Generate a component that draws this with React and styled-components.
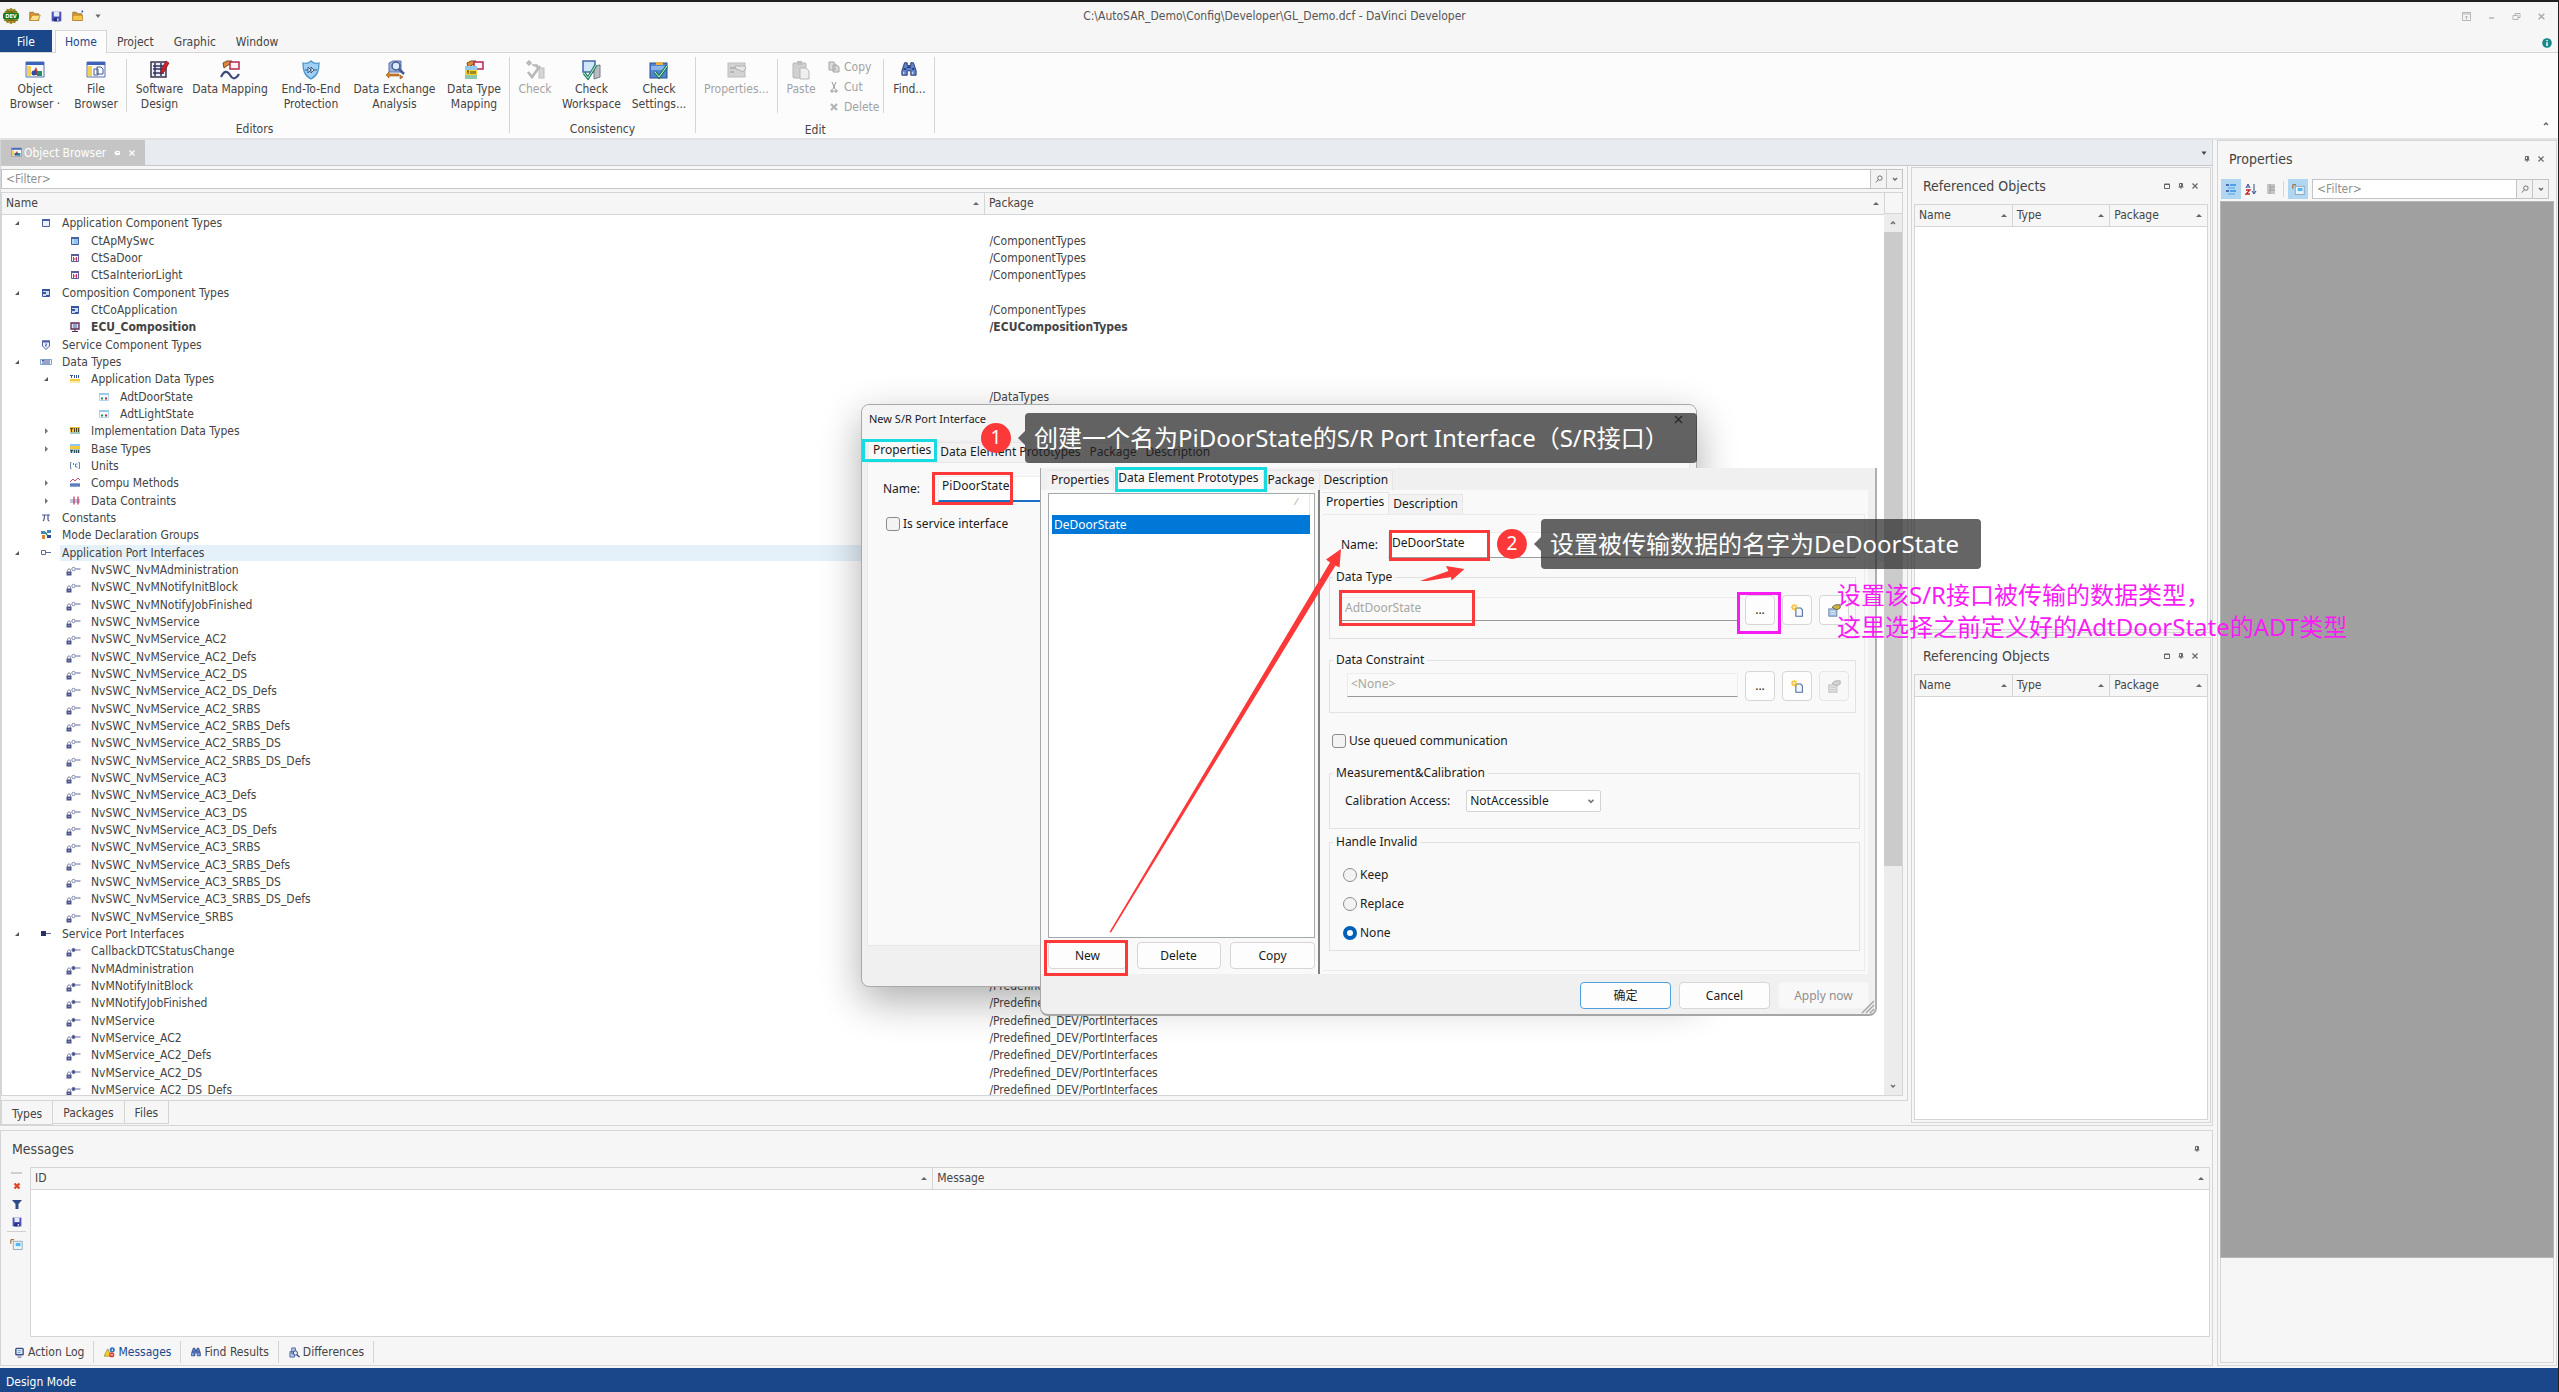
import React from "react";
import styled, { createGlobalStyle, css } from "styled-components";

const GlobalStyle = createGlobalStyle`
  * { box-sizing: border-box; }
  body {
    margin: 0;
    background: #f6f6f6;
    color: #444;
    font: 12px/16px "DejaVu Sans Condensed", "Noto Sans", "Noto Sans CJK SC", sans-serif;
  }
  button, input, select { font: inherit; color: inherit; margin: 0; }
  button { padding: 0; border: 0; background: none; }
`;

const line = "#d3d5d7";

/* ---------- frame ---------- */

const Frame = styled.div`
  position: relative;
  display: flex;
  flex-direction: column;
  height: 100vh;
  overflow: hidden;
  border-top: 2px solid #211f20;
  border-right: 1px solid #211f20;
`;

const TitleBar = styled.header`
  display: grid;
  grid-template-columns: 1fr auto 1fr;
  align-items: center;
  height: 28px;
  padding: 0 12px 0 3px;
  color: #555;
`;

const QuickAccess = styled.div`
  display: flex;
  align-items: center;
  gap: 10px;
`;

const WindowButtons = styled(QuickAccess)`
  justify-content: flex-end;
  gap: 16px;
  color: #b5b5b5;
`;

const MenuTabs = styled.nav`
  display: flex;
  height: 23px;
  border-bottom: 1px solid ${line};
`;

const MenuTab = styled.button`
  padding: 0 9px;
  border: 1px solid transparent;
  border-bottom: 0;
  ${(p) =>
    p.$file &&
    css`
      width: 52px;
      margin-right: 3px;
      background: #19478a;
      color: #fff;
    `}
  ${(p) =>
    p.$active &&
    css`
      margin-bottom: -1px;
      border-color: ${line};
      background: #fcfcfc;
      color: #19478a;
    `}
`;

const HelpSlot = styled.div`
  margin: 6px 6px 0 auto;
`;

const RibbonBar = styled.div`
  display: flex;
  height: 87px;
  background: #fcfcfc;
  border-bottom: 2px solid #e0e2e3;
`;

const RibbonGroup = styled.section`
  display: flex;
  flex-direction: column;
  margin: 4px 0 5px;
  border-right: 1px solid ${line};
`;

const RibbonItems = styled.div`
  display: flex;
  height: 56px;
`;

const GroupName = styled.div`
  margin-top: 9px;
  text-align: center;
`;

const RibbonButton = styled.button`
  display: flex;
  flex-direction: column;
  align-items: center;
  gap: 2px;
  width: ${(p) => p.$w}px;
  padding-top: 3px;
  line-height: 15px;
  color: ${(p) => (p.disabled ? "#a2a2a2" : "#444")};
  white-space: pre;
`;

const RibbonDivider = styled.div`
  width: 1px;
  margin: 2px ${(p) => p.$gap || 0}px 0;
  background: ${line};
`;

const SmallItems = styled.div`
  display: flex;
  flex-direction: column;
  padding: 0 4px;
`;

const SmallButton = styled.button`
  display: flex;
  flex: none;
  align-items: center;
  gap: 4px;
  height: 20px;
  color: #a2a2a2;
`;

const RibbonEnd = styled.div`
  margin: auto 8px 6px auto;
`;

const Main = styled.main`
  flex: 1;
  display: flex;
  gap: 4px;
  min-height: 0;
  padding-bottom: 2px;
`;

const LeftArea = styled.div`
  flex: 1;
  display: flex;
  flex-direction: column;
  gap: 4px;
  min-width: 0;
`;

const Workspace = styled.div`
  flex: 1;
  display: flex;
  flex-direction: column;
  min-height: 0;
  border: 1px solid ${line};
  border-top: 0;
`;

const DocStrip = styled.div`
  display: flex;
  align-items: center;
  justify-content: space-between;
  height: 26px;
  padding-right: 4px;
  background: #e8ecf1;
  border-bottom: 1px solid #c6c8ca;
`;

const DocTab = styled.button`
  display: flex;
  align-items: center;
  gap: 2px;
  height: 100%;
  padding: 0 9px 0 10px;
  background: #c5c5c5;
  color: #fff;

  svg + svg {
    margin-left: 5px;
  }
  span {
    margin-right: 5px;
  }
`;

const DocRow = styled.div`
  flex: 1;
  display: flex;
  gap: 3px;
  min-height: 0;
`;

const DocPane = styled.div`
  flex: 1;
  display: flex;
  flex-direction: column;
  min-width: 0;
`;

const DocBody = styled.div`
  flex: 1;
  display: flex;
  flex-direction: column;
  gap: 3px;
  min-height: 0;
  padding: 3px 4px 4px 0;
  border-right: 1px solid ${line};
  border-bottom: 1px solid ${line};
`;

/* ---------- filter box ---------- */

const FilterBox = styled.div`
  display: flex;
  flex: ${(p) => (p.$grow ? 1 : "none")};
  height: 20px;
  border: 1px solid #c4c4c4;
  background: #fff;

  input {
    flex: 1;
    min-width: 0;
    padding: 0 4px;
    border: 0;
    outline: 0;
    background: transparent;
  }
  input::placeholder {
    color: #909090;
    opacity: 1;
  }
  button {
    display: grid;
    place-items: center;
    width: 16px;
    border-left: 1px solid #c4c4c4;
    background: #f3f3f3;
  }
`;

/* ---------- tables ---------- */

const TableFrame = styled.div`
  flex: 1;
  display: flex;
  min-height: 0;
  border: 1px solid ${line};
  background: #fff;
`;

const TableClip = styled.div`
  flex: 1;
  min-width: 0;
  overflow: hidden;
`;

const Grid = styled.table`
  width: 100%;
  border-collapse: collapse;
  table-layout: fixed;
`;

const Th = styled.th`
  width: ${(p) => p.$width || "auto"};
  height: 21px;
  padding: 0 5px 0 4px;
  background: #f6f6f6;
  border-right: 1px solid ${line};
  border-bottom: 1px solid ${line};
  font-weight: 400;
  text-align: left;

  &:last-child {
    border-right: 0;
  }
  div {
    display: flex;
    align-items: center;
    justify-content: space-between;
  }
`;

const TreeRow = styled.tr`
  height: 17px;
  font-weight: ${(p) => (p.$bold ? 700 : 400)};

  &:nth-child(3n + 1) {
    height: 18px;
  }
  td {
    padding: 0;
    white-space: nowrap;
  }
  td + td {
    padding-left: 5px;
    background: ${(p) => (p.$selected ? "#e5f1fa" : "none")};
  }
`;

const TreeCell = styled.div`
  display: flex;
  align-items: stretch;
  padding-left: ${(p) => p.$level * 29}px;
`;

const TreeSlot = styled.span`
  display: grid;
  place-items: center;
  width: 29px;
`;

const TreeLabel = styled.span`
  flex: 1;
  padding-left: 2px;
  background: ${(p) => (p.$selected ? "#e5f1fa" : "none")};
`;

const ScrollBar = styled.div`
  display: flex;
  flex-direction: column;
  width: 18px;
  background: #ececec;
`;

const ScrollHead = styled.div`
  height: 21px;
  background: #f6f6f6;
  border-left: 1px solid ${line};
  border-bottom: 1px solid ${line};
`;

const ScrollEnd = styled.button`
  display: grid;
  place-items: center;
  height: 18px;
`;

const ScrollTrack = styled.div`
  flex: 1;
`;

const ScrollThumb = styled.div`
  height: 75%;
  background: #cbcbcb;
`;

const ViewTabs = styled.div`
  display: flex;
  height: 24px;
`;

const ViewTab = styled.button`
  height: ${(p) => (p.$active ? 24 : 23)}px;
  padding: 2px 10px 0;
  border: 1px solid ${line};
  border-width: ${(p) => (p.$active ? "0 1px 1px 1px" : "0 1px 1px 0")};
`;

/* ---------- docked panels ---------- */

const RefColumn = styled.div`
  display: grid;
  grid-template-rows: 466fr 486fr;
  gap: 4px;
  width: 301px;
  padding: 1px 1px 2px 0;
`;

const Panel = styled.section`
  display: flex;
  flex-direction: column;
  min-height: 0;
  padding: 0 2px 2px;
  border: 1px solid ${line};
  background: #f6f6f6;
`;

const PanelTitle = styled.h2`
  display: flex;
  align-items: center;
  gap: 6px;
  height: 36px;
  margin: 0;
  padding: 0 9px;
  font-size: 14px;
  font-weight: 400;

  span {
    margin-right: auto;
  }
`;

const PropertiesPanel = styled(Panel)`
  width: 340px;
  margin-right: 1px;
`;

const PropToolbar = styled.div`
  display: flex;
  align-items: flex-end;
  height: 24px;
  padding: 0 5px 2px 1px;
`;

const ToolButton = styled.button`
  display: grid;
  place-items: center;
  width: 20px;
  height: 20px;
  background: ${(p) => (p.$on ? "#b0d6f2" : "none")};
`;

const ToolDivider = styled.div`
  width: 1px;
  height: 16px;
  margin: 0 4px 2px 2px;
  background: ${line};
`;

const ToolFilter = styled.div`
  flex: 1;
  display: flex;
  min-width: 0;
  margin-left: 4px;
`;

const PropCanvas = styled.div`
  flex: 1;
  background: #a0a0a0;
  border: 1px solid #b6b6b6;
`;

const PropHelp = styled.div`
  height: 105px;
  border: 1px solid ${line};
  border-top: 0;
`;

const MessagesPanel = styled(Panel)`
  height: 236px;
`;

const MessagesBody = styled.div`
  flex: 1;
  display: flex;
  min-height: 0;
`;

const MessageTools = styled.div`
  display: flex;
  flex-direction: column;
  align-items: center;
  width: 27px;
  padding-top: 5px;

  button {
    display: grid;
    place-items: center;
    height: 18px;
  }
`;

const MessageRule = styled.hr`
  flex: none;
  width: ${(p) => p.$w}px;
  margin: 0 0 3px;
  border: 0;
  border-top: ${(p) => (p.$w < 15 ? 2 : 1)}px solid #cfcfcf;
`;

const MessageTabs = styled.div`
  display: flex;
  align-items: flex-end;
  height: 26px;
  padding-left: 1px;
`;

const MessageTab = styled.button`
  display: flex;
  align-items: center;
  gap: 3px;
  height: 22px;
  padding: 0 9px 0 10px;
  border-right: 1px solid ${line};
  color: ${(p) => (p.$active ? "#19478a" : "#444")};
`;

const StatusBar = styled.footer`
  height: 24px;
  padding: 6px 6px 0;
  background: #19478a;
  color: #fff;
`;

/* ---------- dialogs ---------- */

const Window = styled.section`
  position: absolute;
  left: ${(p) => p.$x}px;
  top: ${(p) => p.$y}px;
  width: ${(p) => p.$w}px;
  height: ${(p) => p.$h}px;
  display: flex;
  flex-direction: column;
  background: #f0f0f0;
  border: 1px solid #a9a9a9;
  border-radius: 8px;
  color: #1b1b1b;
  font: 12px/16px "Noto Sans", "Noto Sans CJK SC", sans-serif;
  box-shadow: 0 14px 40px rgba(0, 0, 0, 0.32);
`;

const InnerWindow = styled(Window)`
  border-top: 0;
  border-right: 2px solid #b0b0b0;
  border-bottom: 2px solid #a6a6a6;
  border-radius: 0 0 8px 8px;
  box-shadow: none;
`;

const WindowTitle = styled.h3`
  display: flex;
  justify-content: space-between;
  height: 35px;
  margin: 0;
  padding: 6px 12px 0 7px;
  border-radius: 8px 8px 0 0;
  background: #f4f4f4;
  font-size: 11px;
  font-weight: 400;

  svg {
    margin-top: 3px;
  }
`;

const DialogTabs = styled.div`
  display: flex;
  align-items: flex-end;
  height: 22px;
  padding-left: ${(p) => p.$indent}px;
`;

const DialogTab = styled.button`
  height: ${(p) => (p.$active ? 22 : 20)}px;
  padding: 0 4px ${(p) => (p.$active ? 4 : 2)}px;
  border: 1px solid #e6e6e6;
  border-width: 1px 1px 0 0;
  background: ${(p) => (p.$active ? "#f9f9f9" : "#f2f2f2")};
`;

const NamePage = styled.div`
  flex: 1;
  display: flex;
  flex-direction: column;
  gap: 12px;
  margin: 0 6px 0 5px;
  padding: 13px 15px;
  background: #f9f9f9;
  border: 1px solid #e8e8e8;
`;

const FieldRow = styled.div`
  display: flex;
  align-items: center;
  gap: ${(p) => p.$gap || 10}px;
  padding-left: ${(p) => p.$indent || 0}px;
  height: 26px;
`;

const TextBox = styled.input`
  flex: 1;
  min-width: 0;
  height: 26px;
  padding: 0 3px 6px;
  border: 1px solid #ececec;
  border-bottom: ${(p) => (p.$focus ? "2px solid #1a6fc4" : "1px solid #9a9a9a")};
  outline: 0;
  background: #fff;

  &:disabled {
    height: 24px;
    margin-top: 2px;
    padding-bottom: 3px;
    background: #fafafa;
    color: #a6a6a0;
  }
`;

const CheckLabel = styled.label`
  display: flex;
  align-items: center;
  gap: 3px;
  height: 20px;
  padding-left: ${(p) => p.$indent || 0}px;

  input {
    appearance: none;
    width: 14px;
    height: 14px;
    border: 1px solid #8c8c8c;
    border-radius: 3px;
    background: #f3f3f3;
  }
  input[type="radio"] {
    border-radius: 50%;
  }
  input[type="radio"]:checked {
    border: 4px solid #005fb8;
    background: #fff;
  }
`;

const CheckRow = styled.div`
  padding: 18px 0 14px 3px;
`;

const DialogFooter = styled.div`
  display: flex;
  justify-content: flex-end;
  align-items: flex-start;
  gap: 8px;
  height: 40px;
  padding: 8px 6px 0;
`;

const PushButton = styled.button`
  display: grid;
  place-items: center;
  width: ${(p) => p.$w || 91}px;
  height: ${(p) => p.$h || 27}px;
  border: 1px solid ${(p) => (p.$primary ? "#4da0de" : "#d6d6d6")};
  border-radius: 4px;
  background: #fdfdfd;

  &:disabled {
    border-color: ${(p) => (p.$h ? "#e6e6e6" : "#f4f4f4")};
    background: #f8f8f8;
    color: #8f8f8f;
  }
`;

const Split = styled.div`
  flex: 1;
  display: flex;
  min-height: 0;
  margin: 0 7px 0 0;
  background: #f9f9f9;
`;

const ListPane = styled.div`
  display: flex;
  flex-direction: column;
  gap: 4px;
  width: 277px;
  padding: 3px 3px 5px 7px;
`;

const ListBox = styled.ul`
  flex: 1;
  margin: 0;
  padding: 0 4px 0 3px;
  border: 1px solid #a3a7ae;
  background: #fff;
  list-style: none;
`;

const ListHead = styled.li`
  height: 21px;
  padding-right: 12px;
  border-right: 1px solid #e6e6e6;
  color: #999;
  font-size: 9px;
  line-height: 16px;
  text-align: right;
`;

const ListItem = styled.li`
  height: 19px;
  padding-left: 2px;
  background: #0078d7;
  color: #fff;
  line-height: 19px;
`;

const ButtonRow = styled.div`
  display: flex;
  justify-content: space-between;
`;

const DetailPane = styled.div`
  flex: 1;
  display: flex;
  flex-direction: column;
  min-width: 0;
  padding: 2px 3px 3px 2px;
  border-left: 2px solid #828282;
`;

const DetailPage = styled.div`
  flex: 1;
  padding: 17px 8px 0 7px;
  border: 1px solid #ebebeb;
  border-left: 0;
`;

const Group = styled.fieldset`
  display: flex;
  flex-direction: ${(p) => (p.$column ? "column" : "row")};
  align-items: flex-start;
  gap: ${(p) => (p.$column ? 9 : 7)}px;
  height: ${(p) => p.$h}px;
  margin: ${(p) => p.$top}px ${(p) => (p.$wide ? -4 : 0)}px 0 0;
  padding: ${(p) => p.$pad}px 6px 0 ${(p) => p.$indent}px;
  border: 1px solid #e2e2e2;

  legend {
    margin-left: ${(p) => 3 - p.$indent}px;
    padding: 0 3px;
    line-height: 16px;
  }
`;

const SelectWrap = styled.div`
  position: relative;
  width: 135px;
  margin-left: 6px;

  select {
    appearance: none;
    width: 100%;
    height: 22px;
    padding: 0 3px 1px;
    border: 1px solid #d4d4d4;
    border-radius: 2px;
    background: #fff;
  }
  svg {
    position: absolute;
    right: 5px;
    top: 6px;
  }
`;

const Grip = styled.svg`
  position: absolute;
  right: 0;
  bottom: 0;
`;

/* ---------- annotations ---------- */

const Mark = styled.div`
  position: absolute;
  left: ${(p) => p.$x}px;
  top: ${(p) => p.$y}px;
  width: ${(p) => p.$w}px;
  height: ${(p) => p.$h}px;
  border: 3px solid ${(p) => p.$color || "#fc3838"};
  pointer-events: none;
`;

const NoteText = styled.p`
  position: absolute;
  left: ${(p) => p.$x}px;
  top: ${(p) => p.$y}px;
  margin: 0;
  color: #f81cf4;
  font: 24px/32px "Noto Sans", "Noto Sans CJK SC", sans-serif;
  white-space: pre;
`;

const Callout = styled.div`
  position: absolute;
  left: ${(p) => p.$x}px;
  top: ${(p) => p.$y}px;
  width: ${(p) => p.$w}px;
  height: 50px;
  padding-left: 9px;
  border-radius: 4px;
  background: rgba(36, 36, 36, 0.7);
  color: #fff;
  font: 24px/50px "Noto Sans", "Noto Sans CJK SC", sans-serif;
  white-space: nowrap;

  &::before {
    content: "";
    position: absolute;
    right: 100%;
    top: 18px;
    border: 7px solid transparent;
    border-left: 0;
    border-right-color: rgba(36, 36, 36, 0.7);
  }
`;

const Badge = styled.div`
  position: absolute;
  left: ${(p) => p.$x}px;
  top: ${(p) => p.$y}px;
  width: 30px;
  height: 30px;
  border-radius: 50%;
  background: #fc3838;
  color: #fff;
  font: 19px/29px "Noto Sans", sans-serif;
  text-align: center;
`;

const Arrows = styled.svg`
  position: absolute;
  left: 1100px;
  top: 540px;
  pointer-events: none;
`;

/* ---------- icons ---------- */

const Icon = ({ s = 16, vb = 16, children, ...rest }) => (
  <svg width={s} height={s} viewBox={`0 0 ${vb} ${vb}`} fill="none" aria-hidden="true" {...rest}>
    {children}
  </svg>
);

const DevLogo = () => (
  <Icon s={16} vb={17}>
    <circle cx="8.5" cy="8.5" r="8" fill="#b9a32c" />
    <path d="M2 4h13M1 13h15M8.5 0v17M4 1l3 4M13 1l-3 4M4 16l3-4M13 16l-3-4" stroke="#6d5c14" />
    <rect y="5" width="17" height="7" rx="2" fill="#0d7a2a" />
    <text x="8.5" y="11" fontSize="6" fontWeight="700" fill="#fff" textAnchor="middle">DEV</text>
  </Icon>
);

const Folder = ({ star }) => (
  <Icon s={12}>
    <path d="M1 3h5l1 2h6v9H1z" fill="#d9962c" stroke="#8d6a2c" />
    {star ? (
      <path d="M1 7h13v7H1z" fill="#f5c64a" stroke="#b8842a" />
    ) : (
      <path d="M4 7h11l-3 7H1z" fill="#fbe08a" stroke="#b8842a" />
    )}
    {star && <path d="M14 0l1 2-1 2-2-2z" fill="#3b62b5" />}
  </Icon>
);

const Save = ({ s = 11 }) => (
  <Icon s={s}>
    <path d="M1 1h14v14H1z" fill="#4a52b8" />
    <path d="M4 1h8v7H4z" fill="#e3e8fb" />
    <path d="M4 10h8v5H4z" fill="#252d7a" />
    <path d="M9 11h2v3H9z" fill="#fff" />
  </Icon>
);

const Caret = ({ color = "#666" }) => (
  <Icon s={8} vb={8}>
    <path d="M1.5 2.5h5L4 6z" fill={color} />
  </Icon>
);

const SortUp = () => (
  <Icon s={6} vb={6}>
    <path d="M0 5l3-3 3 3z" fill="#666" />
  </Icon>
);

const Chevron = ({ up, color = "#666", s = 8 }) => (
  <Icon s={s} vb={8}>
    <path d={up ? "M2 5l2-2 2 2" : "M2 3l2 2 2-2"} stroke={color} strokeWidth="1.4" />
  </Icon>
);

const Pin = ({ side, color = "#666" }) => (
  <Icon s={8} vb={8} transform={side ? "rotate(90)" : undefined}>
    <path d="M2.5 1.500h3v3h-3zM1.5 5h5" stroke={color} />
    <path d="M4.500 1.500v3M4 5v2" stroke={color} />
  </Icon>
);

const Cross = ({ s = 8, color = "#666", w = 1.2 }) => (
  <Icon s={s} vb={8}>
    <path d="M1.5 1.5l5 5M6.5 1.5l-5 5" stroke={color} strokeWidth={w} />
  </Icon>
);

const Square = () => (
  <Icon s={8} vb={8}>
    <path d="M1.5 2h5v4.500h-5zM1.5 2.500h5" stroke="#666" />
  </Icon>
);

const Magnifier = () => (
  <Icon s={8} vb={9}>
    <circle cx="5.5" cy="3.5" r="2.500" stroke="#666" />
    <path d="M4 5L1 8.500" stroke="#666" />
  </Icon>
);

const Info = () => (
  <Icon s={10} vb={10}>
    <circle cx="5" cy="5" r="4.800" fill="#16898a" />
    <path d="M5 2v1.300M5 4.200V8" stroke="#fff" strokeWidth="1.500" />
  </Icon>
);

const Binoculars = ({ s = 18 }) => (
  <Icon s={s} vb={18}>
    <path d="M4 2h3v3h4V2h3l3 9v5h-6v-5H7v5H1v-5z" fill="#5d86cf" stroke="#232f66" />
    <path d="M3 9h3M12 9h3M7 7h4" stroke="#232f66" strokeWidth="1.500" />
    <path d="M3 12v3M13 12v3" stroke="#b9d7fb" strokeWidth="1.500" />
  </Icon>
);

const Hand = () => (
  <>
    <path d="M3 3l4-2h5l-1 3-3 1-4 3z" fill="#d98a3e" stroke="#7c4a1c" />
    <rect x="10" y="2" width="9" height="7" fill="#fdf1f4" stroke="#b5274f" strokeWidth="1.500" />
  </>
);

const ribbonIcons = {
  object: (
    <>
      <path d="M1 2h18v15H1z" fill="#f6f8fc" stroke="#5874b2" />
      <path d="M1 2h18v3H1z" fill="#3c62ba" />
      <path d="M2 6h4v10H2z" fill="#f3cf55" />
      <path d="M7 15l4-8 3 8z" fill="#c63434" />
      <circle cx="9" cy="13" r="2.500" fill="#2b4fa6" />
      <path d="M12 11h5v5h-5z" fill="#1e8f6a" />
    </>
  ),
  file: (
    <>
      <path d="M1 2h18v15H1z" fill="#f6f8fc" stroke="#5874b2" />
      <path d="M1 2h18v3H1z" fill="#3c62ba" />
      <path d="M2 6h4v10H2z" fill="#f3cf55" />
      <path d="M8 9h4v6H8zM11 7h4l2 2v5h-6z" fill="#fff" stroke="#44598f" />
    </>
  ),
  software: (
    <>
      <path d="M1 2h15v15H1z" fill="#eceefa" stroke="#34344a" strokeWidth="1.500" />
      <path d="M5 3v13M11 3v13M3 6h11M3 9h11M3 13h11" stroke="#30345c" strokeWidth="1.500" />
      <path d="M16 1l3 2-5 9-3 2v-4z" fill="#d0202c" stroke="#7b1420" strokeWidth=".7" />
    </>
  ),
  mapping: (
    <>
      <Hand />
      <path d="M1 17c3-6 6-7 9-2s6 4 9-1" stroke="#3e4b78" strokeWidth="2.200" />
    </>
  ),
  shield: (
    <>
      <path d="M10 1c2 2 5 3 8 2 0 7-1 12-8 16C3 15 2 10 2 3c3 1 6 0 8-2z" fill="#9fd0f4" stroke="#4f95c9" strokeWidth="1.300" />
      <path d="M4 10h3M13 10h3" stroke="#3d5a86" />
      <path d="M7 7l3 3-3 3zM10 7l3 3-3 3z" fill="#dff0fc" stroke="#3d5a86" />
    </>
  ),
  exchange: (
    <>
      <path d="M4 3l4-2h8v11H4z" fill="#9fb3e0" stroke="#5a6ea8" />
      <circle cx="11" cy="6" r="4" fill="#d9eafc" stroke="#44598f" strokeWidth="1.500" />
      <path d="M14 9l5 5" stroke="#44598f" strokeWidth="2.500" />
      <path d="M1 15l3-3v2h10v2H4v2zM18 17l-3-2v4z" fill="#d9822b" stroke="#8a4d12" strokeWidth=".6" />
    </>
  ),
  type: (
    <>
      <Hand />
      <rect x="1" y="6" width="12" height="4" fill="#8fc9ee" />
      <rect x="1" y="10" width="12" height="5" fill="#f8cf2e" />
      <rect x="1" y="15" width="12" height="4" fill="#8fc8a8" />
      <path d="M3 11h2M4 11v3M7 11v3M9 11v3M11 11v3" stroke="#4b4414" />
    </>
  ),
  check: (
    <>
      <path d="M2 3l2-2 2 2-2 2zM7 5h5l1 4" fill="#c9c9c9" stroke="#b4b4b4" strokeWidth="1.500" />
      <rect x="14" y="8" width="5" height="10" fill="#d6d6d6" stroke="#bdbdbd" />
      <path d="M3 12l4 5 8-11" stroke="#b8b8b8" strokeWidth="2.600" />
    </>
  ),
  workspace: (
    <>
      <rect x="1" y="1" width="12" height="11" fill="#cfe5fa" stroke="#4667a6" strokeWidth="1.500" />
      <path d="M12 6l6-1v12l-6 2z" fill="#b9bcc4" stroke="#777b86" />
      <path d="M2 13l4 5 8-13" stroke="#187a5c" strokeWidth="3" />
      <path d="M2 13l4 5 8-13" stroke="#d5f2e4" />
    </>
  ),
  settings: (
    <>
      <rect x="1" y="3" width="17" height="15" fill="#4f86cf" stroke="#2a4f91" />
      <rect x="7" y="2" width="7" height="3" fill="#e9b04a" />
      <path d="M2 6h15v4H2z" fill="#8bb4e8" />
      <path d="M6 12l4 5 8-11" stroke="#187a5c" strokeWidth="3" />
      <path d="M6 12l4 5 8-11" stroke="#d5f2e4" />
    </>
  ),
  props: (
    <>
      <rect x="1" y="3" width="17" height="14" fill="#d2d2d2" stroke="#bdbdbd" />
      <path d="M3 8h6M3 12h4" stroke="#aaa" strokeWidth="1.500" />
      <path d="M8 6h9l2 2-3 4-4-2-3-1z" fill="#e6e6e6" stroke="#b2b2b2" />
    </>
  ),
  paste: (
    <>
      <rect x="2" y="3" width="13" height="15" rx="1" fill="#d0d0d0" stroke="#b7b7b7" />
      <path d="M6 1h5v4H6z" fill="#bdbdbd" />
      <path d="M9 8h6l3 3v8H9z" fill="#efefef" stroke="#b7b7b7" />
    </>
  ),
};

const smallIcons = {
  copy: <path d="M1 1h5l1 2v6H1zM5 4h4l2 2v5H5z" fill="#d9d9d9" stroke="#a6a6a6" />,
  cut: <path d="M4 1l3 7M8 1L5 8M3 9h2v2H3zM7 9h2v2H7z" stroke="#9c9c9c" />,
  delete: <path d="M3 3l6 6M9 3L3 9" stroke="#b4b4b4" strokeWidth="2.200" />,
};

const treeIcons = {
  app: (
    <>
      <path d="M3.5 3.500h7v7h-7z" fill="#e9f1fd" stroke="#4a60a0" />
      <path d="M3 3h8v2H3z" fill="#4a60a0" />
    </>
  ),
  swc: (
    <>
      <path d="M3.5 3.500h7v7h-7z" fill="#8fc6f2" stroke="#4a60a0" />
      <path d="M3 3h8v2H3z" fill="#4a60a0" />
      <path d="M5 5v5" stroke="#dfeefb" />
    </>
  ),
  sensor: (
    <>
      <path d="M3.5 3.500h7v7h-7z" fill="#fbf1f5" stroke="#5a5f98" />
      <path d="M3 3h8v2H3z" fill="#5a5f98" />
      <path d="M5.500 6v4M8.500 6v4M7 7v2" stroke="#c2365f" />
    </>
  ),
  comp: (
    <>
      <path d="M3.5 3.500h7v7h-7z" fill="#cddcf7" stroke="#3a559c" />
      <path d="M3 3h8v2H3z" fill="#3a559c" />
      <path d="M4 6h3v2H4zM7 9h3v1H7z" fill="#3a559c" />
    </>
  ),
  ecu: (
    <>
      <path d="M3 3h8v6H3z" fill="#e3dcec" stroke="#5b2b50" strokeWidth="1.300" />
      <path d="M5 5h4M5 7h4" stroke="#4568b4" />
      <path d="M4 11.500h6M7 9v2" stroke="#5b2b50" />
    </>
  ),
  service: (
    <>
      <path d="M3.500 3h7v5L7 11.500 3.500 8z" fill="#e9f1fd" stroke="#4a60a0" />
      <path d="M3 2.500h8v2H3z" fill="#4a60a0" />
      <path d="M6 6h2L6 8h2" stroke="#4a60a0" strokeWidth=".8" />
    </>
  ),
  types: (
    <>
      <path d="M1.5 4.500h11v5h-11z" fill="#edf4fd" stroke="#7da3cf" />
      <path d="M3 5.500h2M4 5v4M6 5v4M8 5v4M10 5v4" stroke="#3c5394" />
    </>
  ),
  appType: (
    <>
      <path d="M2 7h10v2H2z" fill="#f6c93a" />
      <path d="M2 9h10v2H2z" fill="#fbe9a6" />
      <path d="M2 3.500h3M3.500 3v3M6.500 3v3M8.500 3v3M10.500 3v3" stroke="#2f5597" />
    </>
  ),
  adt: (
    <>
      <path d="M2.500 3.500h9v7h-9z" fill="#f6fafe" stroke="#b5d4ee" />
      <path d="M2 3h10v2H2z" fill="#9cc8ee" />
      <path d="M4 8.500h2" stroke="#1f9b3d" strokeWidth="2" />
      <path d="M8 8.500h2" stroke="#b5274f" strokeWidth="2" />
    </>
  ),
  implType: (
    <>
      <path d="M2 3h10v5H2z" fill="#f0bf35" />
      <path d="M2 8h10v2H2z" fill="#9ecbbd" />
      <path d="M2 4.500h3M3.500 5v3M6.500 4v4M8.500 4v4M10.500 4v4" stroke="#4a4522" />
    </>
  ),
  baseType: (
    <>
      <path d="M2 2h10v2H2z" fill="#8fc6f2" />
      <path d="M2 4h10v3H2z" fill="#f6c93a" />
      <path d="M2 7h10v4H2z" fill="#a9c9c6" />
      <path d="M2 8.500h3M3.500 8v3M6.500 8v3M8.500 8v3M10.500 8v3" stroke="#2b4a5c" />
    </>
  ),
  unit: (
    <>
      <path d="M3.500 3.500h-1v6h1M10.500 3.500h1v6h-1" stroke="#6b83ae" />
      <path d="M9.500 5H7.500v3h2M5.500 4v2" stroke="#3f8fcb" />
    </>
  ),
  compu: (
    <>
      <path d="M2 6l3-3 2 2 3-3 2 2" stroke="#c4506e" />
      <path d="M2 7h10v4H2z" fill="#86a8dd" />
      <path d="M2 9h10" stroke="#3c5394" />
    </>
  ),
  constraint: (
    <>
      <path d="M2 6h10M2 8h10" stroke="#7f8bb8" />
      <path d="M6 2.500v8M10 2.500v8" stroke="#c4305a" strokeWidth="1.200" />
    </>
  ),
  pi: <path d="M3 4h8M5.500 4c0 4 0 5-1.500 6M9 4v4.500c0 1 .5 1.500 1.500 1.500" stroke="#4c568c" strokeWidth="1.200" />,
  mode: (
    <>
      <path d="M2 3h4v3H2zM8 2h4v3H8z" fill="#4a86b8" />
      <path d="M3 7h3v4H3z" fill="#d9822b" />
      <path d="M8 7h4v3H8z" fill="#2f4a92" />
      <path d="M6 4l2 3" stroke="#2b8f6a" strokeWidth="1.500" />
    </>
  ),
  port: <path d="M2.500 4.500h4v4h-4zM7 6.500h5" stroke="#6269a0" />,
  portService: (
    <>
      <path d="M2 4h5v5H2z" fill="#2b2f66" />
      <path d="M7 6.500h5" stroke="#6269a0" />
    </>
  ),
};

const LockedPort = ({ solid }) => (
  <svg width="18" height="14" viewBox="0 0 18 14" fill="none" aria-hidden="true">
    <path d="M1.500 8.500V7.500c0-2 3-2 3 0v1" stroke="#6b7199" />
    <path d="M.5 8.500h5v4h-5z" fill="#4d558a" />
    <path d="M2.500 10.500h1" stroke="#c3c9ea" />
    <circle cx="7.500" cy="6" r="1.700" fill={solid ? "#3a4380" : "#fff"} stroke="#7d84b0" />
    <path d="M9.500 6h5" stroke="#6269a0" />
  </svg>
);

const NewDoc = () => (
  <Icon s={13}>
    <path d="M6 5h6l2 2v8H6z" fill="#f4f8fd" stroke="#4d6a9c" strokeWidth="1.300" />
    <path d="M4 0v8M0 4h8M1 1l6 6M7 1L1 7" stroke="#f0b41e" strokeWidth="1.300" />
    <circle cx="4" cy="4" r="1.500" fill="#fff2a8" />
  </Icon>
);

const EditProps = ({ off }) => (
  <Icon s={13}>
    <rect x="1" y="6" width="10" height="9" fill={off ? "#e2e2e2" : "#a9c2e2"} stroke={off ? "#b5b5b5" : "#5f7ca8"} />
    <path d="M3 9h6M3 12h6" stroke={off ? "#c2c2c2" : "#f2f6fb"} />
    <path d="M5 4l4-3h6v4l-4 2-3-1z" fill={off ? "#d2d2d2" : "#d8b23c"} stroke={off ? "#adadad" : "#4d5c3c"} />
  </Icon>
);

const Pane = ({ s = 13 }) => (
  <Icon s={s}>
    <rect x="4" y="4" width="11" height="10" fill="#e9f5fd" stroke="#8c9aa6" />
    <path d="M7 6h6v4H7z" fill="#54b6ef" />
    <path d="M1 2h4M1 2v5" stroke="#a4743c" strokeWidth="1.500" />
  </Icon>
);

/* ---------- data ---------- */

const nv = ["", "_AC2", "_AC2_Defs", "_AC2_DS", "_AC2_DS_Defs", "_AC2_SRBS", "_AC2_SRBS_Defs", "_AC2_SRBS_DS",
  "_AC2_SRBS_DS_Defs", "_AC3", "_AC3_Defs", "_AC3_DS", "_AC3_DS_Defs", "_AC3_SRBS", "_AC3_SRBS_Defs",
  "_AC3_SRBS_DS", "_AC3_SRBS_DS_Defs", "_SRBS"];

const rows = [
  [0, "app", "Application Component Types", "", "open"],
  [1, "swc", "CtApMySwc", "/ComponentTypes"],
  [1, "sensor", "CtSaDoor", "/ComponentTypes"],
  [1, "sensor", "CtSaInteriorLight", "/ComponentTypes"],
  [0, "comp", "Composition Component Types", "", "open"],
  [1, "comp", "CtCoApplication", "/ComponentTypes"],
  [1, "ecu", "ECU_Composition", "/ECUCompositionTypes"],
  [0, "service", "Service Component Types", ""],
  [0, "types", "Data Types", "", "open"],
  [1, "appType", "Application Data Types", "", "open"],
  [2, "adt", "AdtDoorState", "/DataTypes"],
  [2, "adt", "AdtLightState", "/DataTypes"],
  [1, "implType", "Implementation Data Types", "", "closed"],
  [1, "baseType", "Base Types", "", "closed"],
  [1, "unit", "Units", ""],
  [1, "compu", "Compu Methods", "", "closed"],
  [1, "constraint", "Data Contraints", "", "closed"],
  [0, "pi", "Constants", ""],
  [0, "mode", "Mode Declaration Groups", ""],
  [0, "port", "Application Port Interfaces", "", "open"],
  ...["NvMAdministration", "NvMNotifyInitBlock", "NvMNotifyJobFinished", ...nv.map((n) => `NvMService${n}`)].map(
    (n) => [1, "locked", `NvSWC_${n}`, ""]
  ),
  [0, "portService", "Service Port Interfaces", "", "open"],
  [1, "lockedService", "CallbackDTCStatusChange", ""],
  [1, "lockedService", "NvMAdministration", ""],
  ...["NvMNotifyInitBlock", "NvMNotifyJobFinished", "NvMService", "NvMService_AC2", "NvMService_AC2_Defs",
    "NvMService_AC2_DS", "NvMService_AC2_DS_Defs"].map((n) => [
    1, "lockedService", n, "/Predefined_DEV/PortInterfaces",
  ]),
];

/* ---------- parts ---------- */

const Expander = ({ state }) => (
  <Icon s={6} vb={6}>
    {state === "open" && <path d="M5 1v4H1z" fill="#555" />}
    {state === "closed" && <path d="M2 0l3 3-3 3z" fill="#777" />}
  </Icon>
);

const TreeIcon = ({ name }) => {
  if (name === "locked") return <LockedPort />;
  if (name === "lockedService") return <LockedPort solid />;
  return <Icon s={14} vb={14}>{treeIcons[name]}</Icon>;
};

const HeadCell = ({ children, width }) => (
  <Th $width={width} scope="col">
    <div>
      {children}
      <SortUp />
    </div>
  </Th>
);

const Filter = ({ grow }) => (
  <FilterBox $grow={grow}>
    <input placeholder="<Filter>" aria-label="Filter" />
    <button aria-label="Search"><Magnifier /></button>
    <button aria-label="Filter history"><Chevron /></button>
  </FilterBox>
);

const BigButton = ({ w, icon, children, disabled }) => (
  <RibbonButton $w={w} disabled={disabled}>
    <Icon s={20} vb={20}>{ribbonIcons[icon]}</Icon>
    {children}
  </RibbonButton>
);

const Ribbon = () => (
  <RibbonBar>
    <RibbonGroup>
      <RibbonItems>
        <BigButton w={70} icon="object">{"Object\nBrowser ·"}</BigButton>
        <BigButton w={52} icon="file">{"File\nBrowser"}</BigButton>
        <RibbonDivider $gap={4} />
        <BigButton w={57} icon="software">{"Software\nDesign"}</BigButton>
        <BigButton w={84} icon="mapping">Data Mapping</BigButton>
        <BigButton w={78} icon="shield">{"End-To-End\nProtection"}</BigButton>
        <BigButton w={89} icon="exchange">{"Data Exchange\nAnalysis"}</BigButton>
        <BigButton w={70} icon="type">{"Data Type\nMapping"}</BigButton>
      </RibbonItems>
      <GroupName>Editors</GroupName>
    </RibbonGroup>
    <RibbonGroup>
      <RibbonItems>
        <BigButton w={50} icon="check" disabled>Check</BigButton>
        <BigButton w={63} icon="workspace">{"Check\nWorkspace"}</BigButton>
        <BigButton w={72} icon="settings">{"Check\nSettings..."}</BigButton>
      </RibbonItems>
      <GroupName>Consistency</GroupName>
    </RibbonGroup>
    <RibbonGroup>
      <RibbonItems>
        <BigButton w={81} icon="props" disabled>Properties...</BigButton>
        <RibbonDivider />
        <BigButton w={46} icon="paste" disabled>Paste</BigButton>
        <SmallItems>
          {["Copy", "Cut", "Delete"].map((n) => (
            <SmallButton key={n} disabled>
              <Icon s={12} vb={12}>{smallIcons[n.toLowerCase()]}</Icon>
              {n}
            </SmallButton>
          ))}
        </SmallItems>
        <RibbonDivider />
        <RibbonButton $w={50}>
          <Icon s={20} vb={20}><svg x="2" y="1"><Binoculars s={16} /></svg></Icon>
          Find...
        </RibbonButton>
      </RibbonItems>
      <GroupName>Edit</GroupName>
    </RibbonGroup>
    <RibbonEnd><Chevron up /></RibbonEnd>
  </RibbonBar>
);

const ObjectTree = () => (
  <TableFrame>
    <TableClip>
      <Grid>
        <thead>
          <tr>
            <HeadCell width="52.2%">Name</HeadCell>
            <HeadCell>Package</HeadCell>
          </tr>
        </thead>
        <tbody>
          {rows.map(([level, icon, label, pkg, state], i) => {
            const selected = label === "Application Port Interfaces";
            return (
              <TreeRow key={i} $bold={icon === "ecu"} $selected={selected}>
                <td>
                  <TreeCell $level={level}>
                    <TreeSlot><Expander state={state} /></TreeSlot>
                    <TreeSlot><TreeIcon name={icon} /></TreeSlot>
                    <TreeLabel $selected={selected}>{label}</TreeLabel>
                  </TreeCell>
                </td>
                <td>{pkg}</td>
              </TreeRow>
            );
          })}
        </tbody>
      </Grid>
    </TableClip>
    <ScrollBar>
      <ScrollHead />
      <ScrollEnd aria-label="Scroll up"><Chevron up /></ScrollEnd>
      <ScrollTrack><ScrollThumb /></ScrollTrack>
      <ScrollEnd aria-label="Scroll down"><Chevron /></ScrollEnd>
    </ScrollBar>
  </TableFrame>
);

const RefPanel = ({ title }) => (
  <Panel>
    <PanelTitle><span>{title}</span><Square /><Pin /><Cross /></PanelTitle>
    <TableFrame>
      <TableClip>
        <Grid>
          <thead>
            <tr>
              <HeadCell>Name</HeadCell>
              <HeadCell>Type</HeadCell>
              <HeadCell>Package</HeadCell>
            </tr>
          </thead>
        </Grid>
      </TableClip>
    </TableFrame>
  </Panel>
);

const Messages = () => (
  <MessagesPanel>
    <PanelTitle><span>Messages</span><Pin /></PanelTitle>
    <MessagesBody>
      <MessageTools>
        <MessageRule $w={11} />
        <button aria-label="Clear"><Cross color="#dc4a24" w={2.4} /></button>
        <button aria-label="Filter">
          <Icon s={10} vb={10}><path d="M0 1h10L6.500 5v5h-3V5z" fill="#2f4a85" /></Icon>
        </button>
        <button aria-label="Save"><Save s={10} /></button>
        <MessageRule $w={19} />
        <button aria-label="Details"><Pane /></button>
      </MessageTools>
      <TableFrame>
        <TableClip>
          <Grid>
            <thead>
              <tr>
                <HeadCell width="41.4%">ID</HeadCell>
                <HeadCell>Message</HeadCell>
              </tr>
            </thead>
          </Grid>
        </TableClip>
      </TableFrame>
    </MessagesBody>
    <MessageTabs>
      <MessageTab>
        <Icon s={11} vb={12}>
          <rect x="2" y="1.500" width="8" height="7" rx="1" fill="#dcebfb" stroke="#3f4b85" strokeWidth="1.500" />
          <path d="M4 4h4M4 6h3" stroke="#5a9bd8" /><path d="M4 11h4" stroke="#3f4b85" />
        </Icon>
        Action Log
      </MessageTab>
      <MessageTab $active>
        <Icon s={11} vb={12}>
          <path d="M0 10L4 2l4 8z" fill="#f4cf2a" stroke="#7a6a1c" strokeWidth=".6" />
          <circle cx="9" cy="3" r="2.800" fill="#2e6fc4" />
          <circle cx="8.500" cy="8.500" r="2.800" fill="#d8382e" />
          <path d="M7 8.500h3M9 2v2.500" stroke="#fff" />
        </Icon>
        Messages
      </MessageTab>
      <MessageTab><Binoculars s={10} />Find Results</MessageTab>
      <MessageTab>
        <Icon s={11} vb={12}>
          <path d="M1 5h5v6H1zM3 1h4v6H3z" fill="#b5c4e4" stroke="#5068a4" />
          <circle cx="7" cy="6.500" r="2.300" fill="#e3eefb" stroke="#34457e" />
          <path d="M8.500 8.500L11.500 11" stroke="#34457e" strokeWidth="1.500" />
        </Icon>
        Differences
      </MessageTab>
    </MessageTabs>
  </MessagesPanel>
);

const Properties = () => (
  <PropertiesPanel>
    <PanelTitle><span>Properties</span><Pin /><Cross /></PanelTitle>
    <PropToolbar>
      <ToolButton $on aria-label="Categorized">
        <Icon s={12} vb={12}>
          <path d="M1 2h3M1 8h3" stroke="#2f4a92" strokeWidth="1.500" />
          <path d="M5 2h6M5 8h6" stroke="#2f8fe0" strokeWidth="1.500" />
          <path d="M3 5h7M3 11h7" stroke="#4aa5e8" />
        </Icon>
      </ToolButton>
      <ToolButton aria-label="Alphabetical">
        <Icon s={12} vb={12}>
          <path d="M1 5l2-4 2 4M2 4h2" stroke="#2f4a92" />
          <path d="M1 7h4l-4 4h4" stroke="#c2262e" strokeWidth="1.300" />
          <path d="M9 1v9M7 8l2 3 2-3" stroke="#2f4a92" />
        </Icon>
      </ToolButton>
      <ToolButton aria-label="Property pages">
        <Icon s={12} vb={12}>
          <path d="M2 1h8v10H2z" fill="#c6c6c6" />
          <path d="M5 1v10M5 4h5M5 7h5" stroke="#9d9d9d" />
        </Icon>
      </ToolButton>
      <ToolDivider />
      <ToolButton $on aria-label="Description"><Pane /></ToolButton>
      <ToolFilter><Filter grow /></ToolFilter>
    </PropToolbar>
    <PropCanvas />
    <PropHelp />
  </PropertiesPanel>
);

const NewInterfaceDialog = () => (
  <Window $x={861} $y={402} $w={836} $h={583}>
    <WindowTitle>New S/R Port Interface<Cross s={11} color="#333" w={1} /></WindowTitle>
    <DialogTabs $indent={7}>
      <DialogTab $active>Properties</DialogTab>
      <DialogTab>Data Element Prototypes</DialogTab>
      <DialogTab>Package</DialogTab>
      <DialogTab>Description</DialogTab>
    </DialogTabs>
    <NamePage>
      <FieldRow $gap={18}>
        <label htmlFor="interface-name">Name:</label>
        <TextBox id="interface-name" defaultValue="PiDoorState" $focus />
      </FieldRow>
      <CheckLabel $indent={3}><input type="checkbox" />Is service interface</CheckLabel>
    </NamePage>
    <DialogFooter />
  </Window>
);

const RefField = ({ name, value, off }) => (
  <>
    <TextBox aria-label={name} defaultValue={value} disabled />
    <PushButton $w={30} $h={30}>...</PushButton>
    <PushButton $w={30} $h={30} aria-label="New"><NewDoc /></PushButton>
    <PushButton $w={30} $h={30} aria-label="Properties" disabled={off}><EditProps off={off} /></PushButton>
  </>
);

const PrototypesDialog = () => (
  <InnerWindow $x={1040} $y={466} $w={837} $h={548}>
    <DialogTabs $indent={6}>
      <DialogTab>Properties</DialogTab>
      <DialogTab $active>Data Element Prototypes</DialogTab>
      <DialogTab>Package</DialogTab>
      <DialogTab>Description</DialogTab>
    </DialogTabs>
    <Split>
      <ListPane>
        <ListBox>
          <ListHead>⁄</ListHead>
          <ListItem>DeDoorState</ListItem>
        </ListBox>
        <ButtonRow>
          <PushButton $w={79}>New</PushButton>
          <PushButton $w={84}>Delete</PushButton>
          <PushButton $w={85}>Copy</PushButton>
        </ButtonRow>
      </ListPane>
      <DetailPane>
        <DialogTabs $indent={0}>
          <DialogTab $active>Properties</DialogTab>
          <DialogTab>Description</DialogTab>
        </DialogTabs>
        <DetailPage>
          <FieldRow $indent={12}>
            <label htmlFor="element-name">Name:</label>
            <TextBox id="element-name" defaultValue="DeDoorState" />
          </FieldRow>
          <Group $h={70} $top={11} $pad={10} $indent={11}>
            <legend>Data Type</legend>
            <RefField name="Data Type" value="AdtDoorState" />
          </Group>
          <Group $h={61} $top={13} $pad={3} $indent={17}>
            <legend>Data Constraint</legend>
            <RefField name="Data Constraint" value="<None>" off />
          </Group>
          <CheckRow>
            <CheckLabel><input type="checkbox" />Use queued communication</CheckLabel>
          </CheckRow>
          <Group $h={64} $top={0} $pad={7} $indent={15} $wide>
            <legend>Measurement&amp;Calibration</legend>
            <FieldRow>
              <label htmlFor="access">Calibration Access:</label>
              <SelectWrap>
                <select id="access" defaultValue="NotAccessible">
                  <option>NotAccessible</option>
                </select>
                <Chevron color="#777" s={10} />
              </SelectWrap>
            </FieldRow>
          </Group>
          <Group $h={117} $top={5} $pad={15} $indent={13} $column $wide>
            <legend>Handle Invalid</legend>
            {["Keep", "Replace", "None"].map((n) => (
              <CheckLabel key={n}>
                <input type="radio" name="invalid" defaultChecked={n === "None"} />
                {n}
              </CheckLabel>
            ))}
          </Group>
        </DetailPage>
      </DetailPane>
    </Split>
    <DialogFooter>
      <PushButton $primary>确定</PushButton>
      <PushButton>Cancel</PushButton>
      <PushButton disabled>Apply now</PushButton>
    </DialogFooter>
    <Grip width="14" height="14" viewBox="0 0 14 14" stroke="#a8a8a8" strokeWidth="1.500">
      <path d="M1 13L13 1M5 13l8-8M9 13l4-4" />
    </Grip>
  </InnerWindow>
);

const Annotations = () => (
  <>
    <Mark $x={862} $y={437} $w={75} $h={23} $color="#17dbe0" />
    <Mark $x={932} $y={470} $w={81} $h={33} />
    <Mark $x={1115} $y={465} $w={152} $h={25} $color="#17dbe0" />
    <Mark $x={1044} $y={938} $w={84} $h={36} />
    <Mark $x={1389} $y={528} $w={101} $h={31} />
    <Mark $x={1339} $y={588} $w={136} $h={36} />
    <Mark $x={1737} $y={590} $w={44} $h={42} $color="#f81cf4" />
    <Arrows width="380" height="400" viewBox="1100 542 380 400" fill="#fc3838">
      <path d="M1109.500 932L1330 562.500l-4-3 15-10.500-1.500 18.500-4-2L1111 932.500z" />
      <path d="M1420 581l28.500-10-2.500-5 18.500 3-13 11.500-.5-3.500-24 4z" />
    </Arrows>
    <Badge $x={981} $y={421}>1</Badge>
    <Callout $x={1025} $y={411} $w={672}>创建一个名为PiDoorState的S/R Port Interface（S/R接口）</Callout>
    <Badge $x={1497} $y={527}>2</Badge>
    <Callout $x={1541} $y={517} $w={440}>设置被传输数据的名字为DeDoorState</Callout>
    <NoteText $x={1837} $y={577}>
      {"设置该S/R接口被传输的数据类型，\n这里选择之前定义好的AdtDoorState的ADT类型"}
    </NoteText>
  </>
);

export default function App() {
  return (
    <>
      <GlobalStyle />
      <Frame>
        <TitleBar>
          <QuickAccess>
            <DevLogo />
            <Folder />
            <Save />
            <Folder star />
            <Caret />
          </QuickAccess>
          <span>C:\AutoSAR_Demo\Config\Developer\GL_Demo.dcf - DaVinci Developer</span>
          <WindowButtons>
            <Icon s={9} vb={9}><path d="M.5.5h8v8h-8zM.5 2h8M4.500 7.500V4M3 5.500L4.500 4 6 5.500" stroke="currentColor" /></Icon>
            <Icon s={9} vb={9}><path d="M2 6h5" stroke="currentColor" strokeWidth="1.500" /></Icon>
            <Icon s={9} vb={9}><path d="M1 3.500h5v4H1zM3 3.500v-2h5v4H6" stroke="currentColor" /></Icon>
            <Cross s={9} color="#aaa" />
          </WindowButtons>
        </TitleBar>
        <MenuTabs>
          <MenuTab $file>File</MenuTab>
          <MenuTab $active>Home</MenuTab>
          <MenuTab>Project</MenuTab>
          <MenuTab>Graphic</MenuTab>
          <MenuTab>Window</MenuTab>
          <HelpSlot><Info /></HelpSlot>
        </MenuTabs>
        <Ribbon />
        <Main>
          <LeftArea>
            <Workspace>
              <DocStrip>
                <DocTab>
                  <Icon s={11} vb={20}>{ribbonIcons.object}</Icon>
                  <span>Object Browser</span>
                  <Pin side color="#fff" />
                  <Cross color="#fff" />
                </DocTab>
                <Caret color="#444" />
              </DocStrip>
              <DocRow>
                <DocPane>
                  <DocBody>
                    <Filter />
                    <ObjectTree />
                  </DocBody>
                  <ViewTabs>
                    <ViewTab $active>Types</ViewTab>
                    <ViewTab>Packages</ViewTab>
                    <ViewTab>Files</ViewTab>
                  </ViewTabs>
                </DocPane>
                <RefColumn>
                  <RefPanel title="Referenced Objects" />
                  <RefPanel title="Referencing Objects" />
                </RefColumn>
              </DocRow>
            </Workspace>
            <Messages />
          </LeftArea>
          <Properties />
        </Main>
        <StatusBar>Design Mode</StatusBar>
        <NewInterfaceDialog />
        <PrototypesDialog />
        <Annotations />
      </Frame>
    </>
  );
}
